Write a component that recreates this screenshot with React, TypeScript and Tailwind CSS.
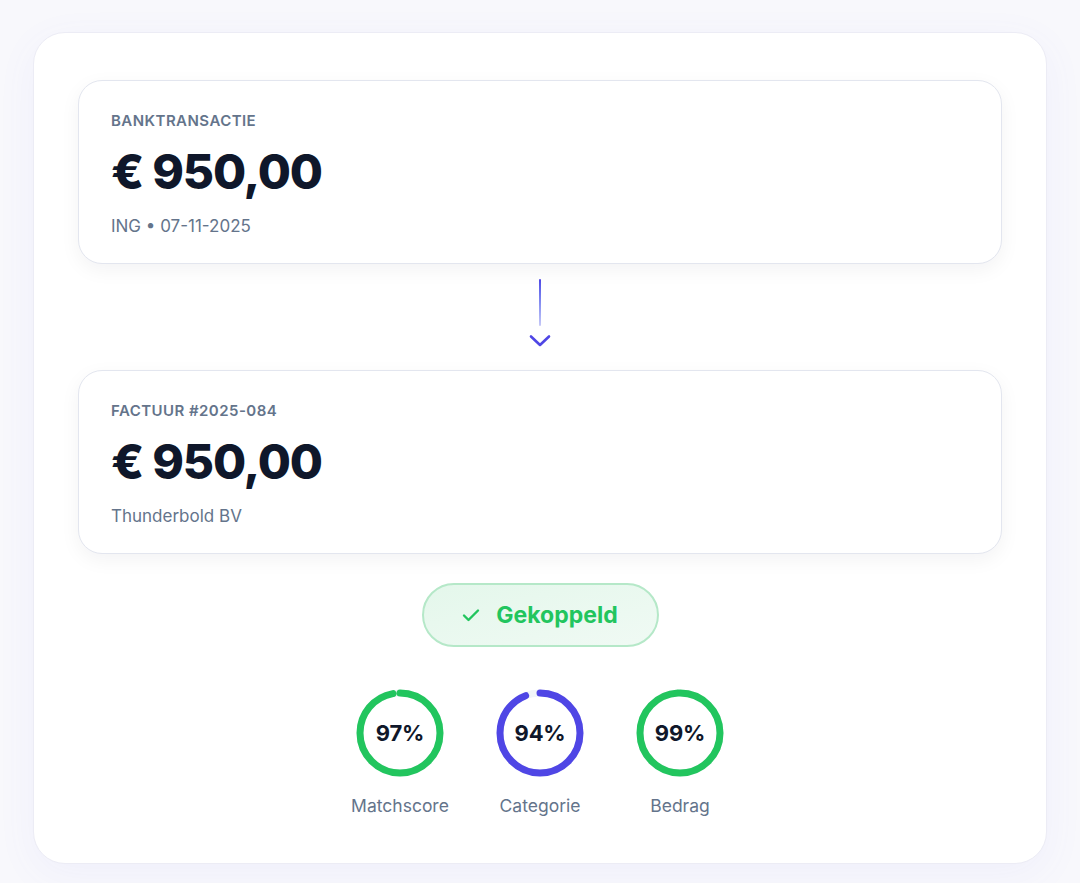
import React from "react";

type Ring = { value: number; label: string; color: string };

const rings: Ring[] = [
  { value: 97, label: "Matchscore", color: "#22c55e" },
  { value: 94, label: "Categorie", color: "#4f46e5" },
  { value: 99, label: "Bedrag", color: "#22c55e" },
];

function ScoreRing({ value, label, color }: Ring) {
  const r = 40;
  const c = 2 * Math.PI * r;
  return (
    <div className="w-[100px] flex flex-col items-center">
      <div className="relative w-[88px] h-[88px]">
        <svg width="88" height="88" viewBox="0 0 88 88" className="-rotate-90">
          <circle cx="44" cy="44" r={r} fill="none" stroke="#f1f5f9" strokeWidth="7" />
          <circle
            cx="44"
            cy="44"
            r={r}
            fill="none"
            stroke={color}
            strokeWidth="7"
            strokeLinecap="round"
            strokeDasharray={`${(c * value) / 100} ${c}`}
          />
        </svg>
        <div className="absolute inset-0 flex items-center justify-center text-[22px] font-bold text-[#0f172a] tracking-[-0.01em]">
          {value}%
        </div>
      </div>
      <div className="mt-[17px] text-[17.5px] leading-6 text-[#64748b]">{label}</div>
    </div>
  );
}

function Card({ label, sub }: { label: string; sub: React.ReactNode }) {
  return (
    <div className="h-[184px] rounded-3xl border border-[#e3e6ef] bg-white shadow-[0_6px_20px_rgba(15,23,42,0.05)] px-8 pt-[30px]">
      <div className="text-[15px] leading-5 font-semibold tracking-[0.03em] text-[#64748b] uppercase">{label}</div>
      <div className="mt-[14px] text-[48px] leading-[53px] font-extrabold tracking-[-0.025em] text-[#0f172a]">€ 950,00</div>
      <div className="mt-[16px] text-[17px] leading-6 text-[#64748b]">{sub}</div>
    </div>
  );
}

export default function App() {
  return (
    <div
      className="min-h-screen bg-[#f8f8fc] pt-8 pl-[33px]"
      style={{ fontFamily: "Inter, 'Noto Sans', sans-serif" }}
    >
      <div className="w-[1014px] h-[832px] rounded-[32px] border border-[#ececf5] bg-white shadow-[0_10px_40px_rgba(99,102,241,0.06)] px-[44px] pt-[47px]">
        <Card label="Banktransactie" sub={<>ING • 07-11-2025</>} />

        <div className="h-[106px] flex flex-col items-center pt-[15px]">
          <div className="w-[2px] h-[47px] rounded-full bg-gradient-to-b from-[#4f46e5] to-[#c7c9f7]" />
          <svg width="22" height="14" viewBox="0 0 22 14" className="mt-[8px]">
            <path d="M2 2.5 L11 11 L20 2.5" fill="none" stroke="#4f46e5" strokeWidth="2.6" strokeLinecap="round" strokeLinejoin="round" />
          </svg>
        </div>

        <Card label="Factuur #2025-084" sub="Thunderbold BV" />

        <div className="mt-[29px] flex justify-center">
          <div className="w-[237px] h-[64px] rounded-full border-2 border-[#b5e8c8] bg-gradient-to-br from-[#e4f7eb] to-[#f0faf4] flex items-center justify-center gap-4">
            <svg width="18" height="14" viewBox="0 0 18 14">
              <path d="M2 7.5 L6.5 12 L16 2.5" fill="none" stroke="#22c55e" strokeWidth="2.4" strokeLinecap="round" strokeLinejoin="round" />
            </svg>
            <span className="text-[23px] font-bold text-[#22c55e]">Gekoppeld</span>
          </div>
        </div>

        <div className="mt-[42px] flex justify-center gap-10">
          {rings.map((r) => (
            <ScoreRing key={r.label} {...r} />
          ))}
        </div>
      </div>
    </div>
  );
}
